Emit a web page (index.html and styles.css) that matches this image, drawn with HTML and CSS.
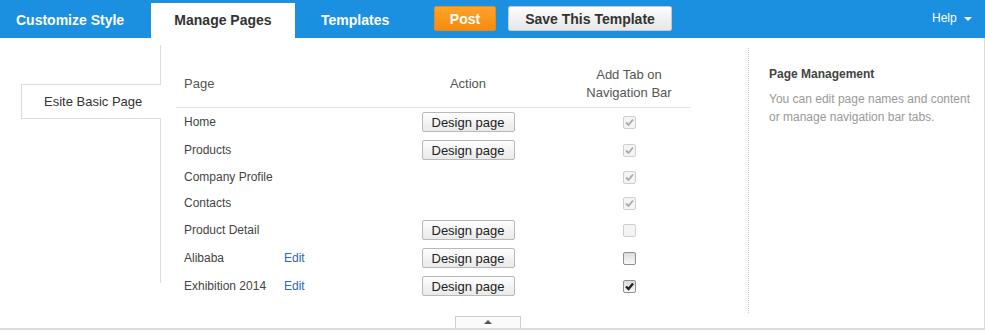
FILE: index.html
```html
<!DOCTYPE html>
<html lang="en">
<head>
    <meta charset="UTF-8">
    <title>Manage Pages</title>
    <link rel="stylesheet" href="styles.css">
</head>
<body>
    <div class="topbar">
        <a class="tab tab-first">Customize Style</a>
        <a class="tab tab-active">Manage Pages</a>
        <a class="tab tab-third">Templates</a>
        <button class="btn-post">Post</button>
        <button class="btn-save">Save This Template</button>
        <div class="help">Help <span class="caret"></span></div>
    </div>

    <div class="main">
        <div class="sidebar">
            <div class="side-tab">Esite Basic Page</div>
        </div>

        <div class="pages">
            <table class="page-table">
                <thead>
                    <tr>
                        <th class="col-page">Page</th>
                        <th class="col-action">Action</th>
                        <th class="col-tab">Add Tab on<br>Navigation Bar</th>
                    </tr>
                </thead>
                <tbody>
                    <tr>
                        <td class="col-page">Home</td>
                        <td class="col-action"><button class="btn-design">Design page</button></td>
                        <td class="col-tab"><span class="cb cb-disabled"><svg viewBox="0 0 11 11"><path d="M2 5.5 L4.5 8 L9 2.5"/></svg></span></td>
                    </tr>
                    <tr>
                        <td class="col-page">Products</td>
                        <td class="col-action"><button class="btn-design">Design page</button></td>
                        <td class="col-tab"><span class="cb cb-disabled"><svg viewBox="0 0 11 11"><path d="M2 5.5 L4.5 8 L9 2.5"/></svg></span></td>
                    </tr>
                    <tr>
                        <td class="col-page">Company Profile</td>
                        <td class="col-action"></td>
                        <td class="col-tab"><span class="cb cb-disabled"><svg viewBox="0 0 11 11"><path d="M2 5.5 L4.5 8 L9 2.5"/></svg></span></td>
                    </tr>
                    <tr>
                        <td class="col-page">Contacts</td>
                        <td class="col-action"></td>
                        <td class="col-tab"><span class="cb cb-disabled"><svg viewBox="0 0 11 11"><path d="M2 5.5 L4.5 8 L9 2.5"/></svg></span></td>
                    </tr>
                    <tr>
                        <td class="col-page">Product Detail</td>
                        <td class="col-action"><button class="btn-design">Design page</button></td>
                        <td class="col-tab"><span class="cb cb-disabled"></span></td>
                    </tr>
                    <tr>
                        <td class="col-page"><span class="page-name">Alibaba</span><a class="edit">Edit</a></td>
                        <td class="col-action"><button class="btn-design">Design page</button></td>
                        <td class="col-tab"><span class="cb"></span></td>
                    </tr>
                    <tr>
                        <td class="col-page"><span class="page-name">Exhibition 2014</span><a class="edit">Edit</a></td>
                        <td class="col-action"><button class="btn-design">Design page</button></td>
                        <td class="col-tab"><span class="cb cb-checked"><svg viewBox="0 0 11 11"><path d="M2 5.5 L4.5 8 L9 2.5"/></svg></span></td>
                    </tr>
                </tbody>
            </table>
        </div>

        <div class="info">
            <h3>Page Management</h3>
            <p>You can edit page names and content or manage navigation bar tabs.</p>
        </div>

        <div class="collapse"><span class="up"></span></div>
    </div>
</body>
</html>
```

FILE: styles.css
```css
body {
    margin: 0;
    font-family: "Liberation Sans", Arial, sans-serif;
    color: #444;
    background: #fff;
    width: 985px;
}
.topbar {
    display: flex;
    align-items: flex-start;
    height: 38px;
    background: #1b8fe0;
}
.tab {
    display: block;
    box-sizing: border-box;
    margin-top: 3px;
    height: 35px;
    line-height: 34px;
    font-size: 14px;
    font-weight: bold;
    color: #fff;
    white-space: nowrap;
}
.tab-first {
    width: 151px;
    padding-left: 16px;
}
.tab-active {
    width: 144px;
    text-align: center;
    background: #fff;
    color: #333;
}
.tab-third {
    width: 139px;
    padding-left: 26px;
}
.btn-post,
.btn-save {
    margin-top: 6px;
    height: 25px;
    font-family: inherit;
    font-size: 14px;
    font-weight: bold;
    border-radius: 2px;
    padding: 0;
    cursor: pointer;
}
.btn-post {
    width: 62px;
    color: #fff;
    border: 1px solid #f08a0a;
    background: linear-gradient(#ffa32b, #f78b0e);
}
.btn-save {
    width: 164px;
    margin-left: 12px;
    color: #333;
    border: 1px solid #c8c8c8;
    background: linear-gradient(#fdfdfd, #e6e6e6);
}
.help {
    margin-left: auto;
    padding-right: 13px;
    line-height: 37px;
    font-size: 12px;
    color: #fff;
}
.caret {
    display: inline-block;
    margin-left: 4px;
    vertical-align: middle;
    border-top: 4px solid #fff;
    border-left: 4px solid transparent;
    border-right: 4px solid transparent;
}
.main {
    position: relative;
    display: flex;
    align-items: flex-start;
    height: 290px;
    border-right: 1px solid #dcdcdc;
    border-bottom: 2px solid #dcdcdc;
}
.sidebar {
    width: 160px;
    height: 238px;
    margin-top: 7px;
    border-right: 1px solid #dcdcdc;
}
.side-tab {
    margin: 39px -1px 0 21px;
    height: 33px;
    line-height: 33px;
    padding-left: 22px;
    border: 1px solid #dcdcdc;
    border-right: none;
    background: #fff;
    font-size: 13px;
    color: #333;
}
.pages {
    width: 514px;
    margin: 23px 0 0 15px;
}
.page-table {
    width: 514px;
    table-layout: fixed;
    border-collapse: collapse;
    font-size: 12px;
    color: #444;
}
.page-table th {
    height: 36px;
    padding: 5px 0;
    line-height: 18px;
    font-size: 13px;
    font-weight: normal;
    color: #555;
    border-bottom: 1px solid #e2e2e2;
}
.page-table td {
    padding: 4px 0;
    line-height: 18px;
    vertical-align: middle;
}
.col-page {
    width: 184px;
    padding-left: 8px !important;
    text-align: left;
}
.col-action {
    width: 200px;
    text-align: center;
}
.col-tab {
    width: 122px;
    text-align: center;
}
.page-name {
    display: inline-block;
    width: 100px;
}
.edit {
    color: #2d69b4;
    cursor: pointer;
}
.btn-design {
    display: inline-block;
    vertical-align: middle;
    width: 93px;
    height: 20px;
    padding: 0;
    font-family: inherit;
    font-size: 13px;
    color: #222;
    border: 1px solid #b9b9b9;
    border-radius: 2px;
    background: linear-gradient(#fefefe, #e9e9e9);
}
.cb {
    display: inline-block;
    vertical-align: middle;
    box-sizing: border-box;
    width: 13px;
    height: 13px;
    border: 1px solid #8f8f8f;
    border-radius: 2px;
    background: linear-gradient(#dcdcdc, #f8f8f8);
}
.cb svg {
    display: block;
    width: 11px;
    height: 11px;
}
.cb path {
    fill: none;
    stroke: #222;
    stroke-width: 2.4;
}
.cb-disabled {
    border-color: #cfcfcf;
    background: #f4f4f4;
}
.cb-disabled path {
    stroke: #aaa;
    stroke-width: 1.8;
}
.info {
    flex: 1;
    height: 265px;
    margin: 10px 0 0 58px;
    padding-left: 20px;
    border-left: 1px dotted #c8c8c8;
}
.info h3 {
    margin: 17px 0 7px;
    line-height: 18px;
    font-size: 12px;
    color: #444;
}
.info p {
    margin: 0;
    width: 210px;
    line-height: 18px;
    font-size: 12px;
    color: #999;
}
.collapse {
    position: absolute;
    left: 455px;
    bottom: 0;
    width: 64px;
    height: 11px;
    border: 1px solid #cfcfcf;
    border-bottom: none;
    background: #fafafa;
    text-align: center;
}
.up {
    display: inline-block;
    vertical-align: top;
    margin-top: 3px;
    border-bottom: 4px solid #555;
    border-left: 4px solid transparent;
    border-right: 4px solid transparent;
}
```
